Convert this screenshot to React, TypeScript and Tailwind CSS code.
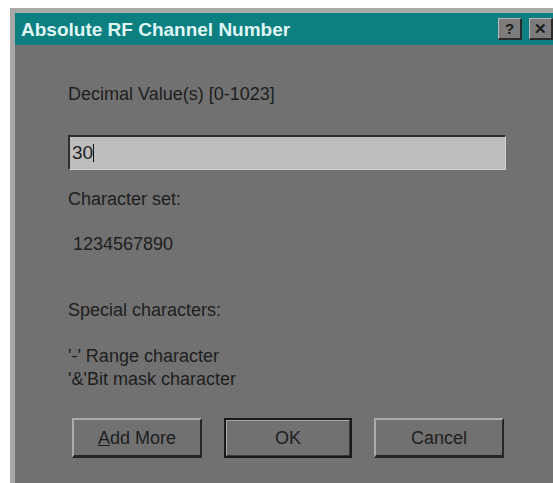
const face = "font-['Liberation_Sans',Arial,sans-serif]"

function TitleButton({ children }: { children: React.ReactNode }) {
  return (
    <div className="flex h-[22px] w-[24px] items-center justify-center border-t border-l border-[#b8b8b8] border-r-2 border-b-2 border-r-[#2a2a2a] border-b-[#2a2a2a] bg-[#7c7c7c] text-[15px] font-bold leading-none text-[#1a1a1a]">
      {children}
    </div>
  )
}

function DlgButton({ children, isDefault = false }: { children: React.ReactNode; isDefault?: boolean }) {
  if (isDefault) {
    return (
      <div className="h-[40px] w-[128px] border-2 border-[#1a1a1a]">
        <div className="flex h-full w-full items-center justify-center border-t border-l border-[#a6a6a6] border-r border-b border-r-[#3a3a3a] border-b-[#3a3a3a] text-[18px] text-[#1e1e1e]">
          {children}
        </div>
      </div>
    )
  }
  return (
    <div className="flex h-[40px] w-[130px] items-center justify-center border-t-2 border-l-2 border-[#ababab] border-r-2 border-b-[3px] border-r-[#262626] border-b-[#262626] text-[18px] text-[#1e1e1e]">
      {children}
    </div>
  )
}

export default function App() {
  return (
    <div className={`h-[483px] w-[553px] overflow-hidden bg-white pt-[8px] pl-[10px] ${face}`}>
      <div className="flex h-[475px] w-[543px] flex-col border-t-[5px] border-l-[5px] border-[#a8a8a8] bg-[#717171]">
        {/* caption bar */}
        <div className="flex h-[32px] items-center bg-[#0c7f80] pl-[6px]">
          <span className="text-[19px] font-bold leading-none text-[#dff6f5]">Absolute RF Channel Number</span>
          <div className="ml-auto flex gap-[7px]">
            <TitleButton>?</TitleButton>
            <TitleButton>✕</TitleButton>
          </div>
        </div>

        <div className="flex flex-col pl-[53px] text-[18px] leading-[22px] text-[#1e1e1e]">
          <div className="mt-[38px]">Decimal Value(s) [0-1023]</div>

          <div className="mt-[30px] flex h-[35px] w-[438px] items-center border-t-2 border-l-2 border-[#2e2e2e] border-r border-b border-r-[#cfcfcf] border-b-[#cfcfcf] bg-[#bdbdbd] pl-[2px] text-[19px]">
            <span>30</span>
            <span className="h-[18px] w-[1px] bg-[#111]" />
          </div>

          <div className="mt-[18px]">Character set:</div>
          <div className="mt-[23px] pl-[5px]">1234567890</div>

          <div className="mt-[44px]">Special characters:</div>
          <div className="mt-[24px] leading-[23px]">
            <div>'-' Range character</div>
            <div>'&amp;'Bit mask character</div>
          </div>

          <div className="mt-[27px] flex gap-[22px] pl-[4px]">
            <DlgButton>
              <span><span className="underline">A</span>dd More</span>
            </DlgButton>
            <DlgButton isDefault>OK</DlgButton>
            <DlgButton>Cancel</DlgButton>
          </div>
        </div>
      </div>
    </div>
  )
}
